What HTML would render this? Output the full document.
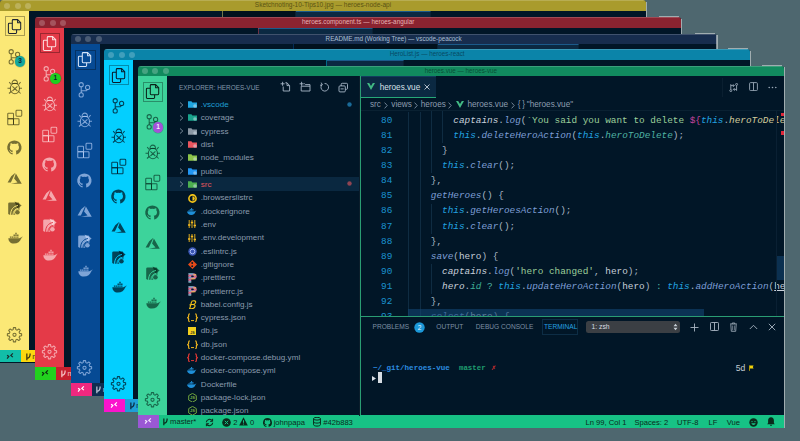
<!DOCTYPE html><html><head><meta charset="utf-8"><style>
*{margin:0;padding:0;box-sizing:border-box}
html,body{width:800px;height:441px;overflow:hidden;background:#4e676f;font-family:"Liberation Sans",sans-serif}
.win{position:absolute;width:646px;height:362.5px;background:#011627;overflow:hidden;border-radius:3px 3px 0 0}
.edge{position:absolute;width:1.3px;background:rgba(215,220,220,0.6)}
.tb{position:absolute;left:0;top:0;width:100%;height:10.6px}
.hl{position:absolute;left:0;top:0;width:100%;height:0.8px;background:rgba(255,255,255,0.18)}
.dot{position:absolute;top:2.5px;width:6px;height:6px;border-radius:50%;background:rgba(255,255,255,0.22)}
.t{position:absolute;white-space:nowrap}
.ttl{position:absolute;left:0;right:0;top:0px;text-align:center;font-size:6.3px;line-height:10px;white-space:nowrap}
.tabbar{position:absolute;top:10.6px;right:0;height:22px;background:#011627}
.tab{position:absolute;top:0;height:22px;background:#01111d;border-right:1px solid #0a2133}
.tab.act{background:#0b2942;border-top:1px solid #1b5a8a}
.ab{position:absolute;left:0;top:10.6px;width:29px;height:339.2px}
.abox{position:absolute;left:4.9px;top:16.1px;width:20.4px;height:20.2px;border:1px solid}
.aic{position:absolute;line-height:0}
.badge{position:absolute;left:14.7px;top:56.3px;width:10.8px;height:10.8px;border-radius:50%;font-size:6.5px;line-height:10.8px;text-align:center;font-weight:bold;box-shadow:0 0 0 0.6px rgba(0,0,0,0.2)}
.st{position:absolute;left:0;top:349.8px;width:100%;height:12.7px}
.rm{position:absolute;left:0;top:0;width:21px;height:12.7px}
</style></head><body>
<div class="win" style="left:0px;top:0px;z-index:1">
<div class="tb" style="background:#a99b2c"><i class="hl"></i><i class="dot" style="left:4px"></i><i class="dot" style="left:14.6px"></i><i class="dot" style="left:25px"></i><div class="ttl" style="color:rgba(60,55,10,0.75);font-size:6.5px">Sketchnoting-10-Tips10.jpg — heroes-node-api</div></div>
<div class="tabbar" style="left:223px">
<div class="tab" style="left:0px;width:73px"></div>
<div class="tab act" style="left:73px;width:135px"></div>
</div>
<div style="position:absolute;left:222.4px;top:10.6px;width:0.9px;height:339.2px;background:#fbe876;opacity:0.45"></div>
<div class="ab" style="background:#fbe876"></div>
<div class="abox" style="border-color:rgba(0,0,0,0.32)"></div>
<svg style="position:absolute;left:-0.4px;top:-0.3px" width="29" height="350" viewBox="0 0 29 350"><g fill="none" stroke="#1c2433" stroke-width="1.05" stroke-linejoin="round"><path d="M13.2 19.6H17.6L20.7 22.7V28.8Q20.7 29.7 19.8 29.7H13.2Q12.3 29.7 12.3 28.8V20.5Q12.3 19.6 13.2 19.6Z"/><path d="M17.6 19.6V22.7H20.7"/><path d="M12.3 23.2H9.3Q8.4 23.2 8.4 24.1V32.6Q8.4 33.5 9.3 33.5H15.7Q16.6 33.5 16.6 32.6V29.7"/></g><g fill="none" stroke="rgba(30,30,5,0.6)" stroke-width="1.05"><circle cx="11.2" cy="51.7" r="2.1"/><circle cx="11.2" cy="61.9" r="2.1"/><circle cx="17.6" cy="54.4" r="2.1"/><path d="M11.2 53.8V59.8M17.6 56.5L16.4 57.8H12L11.2 58.6"/><g transform="translate(7 79.5)"><path d="M5 4a2.75 3.4 0 0 1 5.5 0z"/><ellipse cx="7.9" cy="9" rx="4.6" ry="5.3"/><path d="M5.4 6.9l5 4.6M10.4 6.9l-5 4.6M2.2 2.7L4.2 5M13.6 2.7L11.6 5M0.5 8.8H3.3M15 8.8H12.5M2 14L4.2 12M13.6 14L11.6 12"/></g><g transform="translate(7 109.5)"><rect x="0.75" y="3.75" width="5.75" height="5.5" rx=".7"/><rect x="0.75" y="9.25" width="5.75" height="6" rx=".7"/><rect x="6.5" y="9.25" width="5.5" height="6" rx=".7"/><rect x="9" y="0.75" width="5.75" height="6" rx=".9"/></g></g><g fill="rgba(30,30,5,0.6)"><g transform="translate(7.2 140.2) scale(0.9)"><path d="M8 .2a8 8 0 0 0-2.53 15.59c.4.07.55-.17.55-.38v-1.4c-2.23.48-2.7-1.07-2.7-1.07-.36-.92-.89-1.17-.89-1.17-.73-.5.05-.49.05-.49.8.06 1.23.83 1.23.83.71 1.23 1.87.87 2.33.67.07-.52.28-.87.5-1.07-1.78-.2-3.65-.89-3.65-3.96 0-.87.31-1.59.83-2.15-.08-.2-.36-1.02.08-2.12 0 0 .67-.22 2.2.82a7.6 7.6 0 0 1 4 0c1.53-1.04 2.2-.82 2.2-.82.44 1.1.16 1.92.08 2.12.51.56.82 1.28.82 2.15 0 3.08-1.87 3.76-3.66 3.96.29.25.54.73.54 1.48v2.2c0 .21.15.46.55.38A8 8 0 0 0 8 .2z"/></g><path transform="translate(7.6 171.2) scale(0.59)" d="M5.483 21.3H24L14.025 4.013l-3.038 8.347 5.836 6.938L5.483 21.3zM13.23 2.7L6.105 8.677 0 19.253h5.505v.014L13.23 2.7z"/><rect x="8.2" y="202.4" width="11.2" height="12.3" rx="1.4"/><path d="M14.6 201.4L21.6 205.2L17.6 209.2Z"/><path d="M10.6 214.9C10.6 209.6 13.3 206.3 17.9 205.5" fill="none" stroke="#fbe876" stroke-width="1.0"/><path d="M12.9 214.9C13.1 211.1 15.2 208.8 18.6 208.2" fill="none" stroke="#fbe876" stroke-width="0.9"/><circle cx="17.4" cy="212.3" r="3.1" fill="#fbe876"/><circle cx="17.4" cy="212.3" r="2.3"/><path d="M8.3 238.3H19.5C20 237.6 20.8 237.3 21.5 237.5C21.8 236.8 22.2 236.5 22.5 236.6C22.3 237.6 21.8 238.2 21.2 238.6C20.2 241.6 17.6 243.6 13.8 243.6C10.4 243.6 8.6 241.4 8.3 238.3Z"/><path d="M9.9 236.4h1.4v1.4H9.9zM11.7 236.4h1.4v1.4h-1.4zM13.5 236.4h1.4v1.4h-1.4zM15.3 236.4h1.4v1.4h-1.4zM17.1 236.4h1.4v1.4h-1.4zM13.5 234.6h1.4v1.4h-1.4zM15.3 234.6h1.4v1.4h-1.4zM17.1 234.6h1.4v1.4h-1.4zM15.3 232.8h1.4v1.4h-1.4z"/></g><g fill="none" stroke="rgba(30,30,5,0.6)" stroke-width="1.05" stroke-linejoin="round"><path d="M13.14,329.63 L13.42,327.63 L15.58,327.63 L15.86,329.63 L17.16,330.16 L18.77,328.96 L20.29,330.48 L19.09,332.09 L19.62,333.39 L21.62,333.67 L21.62,335.83 L19.62,336.11 L19.09,337.41 L20.29,339.02 L18.77,340.54 L17.16,339.34 L15.86,339.87 L15.58,341.87 L13.42,341.87 L13.14,339.87 L11.84,339.34 L10.23,340.54 L8.71,339.02 L9.91,337.41 L9.38,336.11 L7.38,335.83 L7.38,333.67 L9.38,333.39 L9.91,332.09 L8.71,330.48 L10.23,328.96 L11.84,330.16Z"/><circle cx="14.5" cy="334.75" r="1.6"/></g></svg>
<div class="badge" style="background:#12a79d;color:#123">3</div>
<div class="st" style="background:#fbd80f"><div class="rm" style="background:#12bea8"></div><svg style="position:absolute;left:6px;top:2px" width="8" height="8" viewBox="0 0 8 8"><path d="M1.1 3.15L2.85 4.4L1.1 6.65M6.85 1.4L4.85 3.4L6.85 5.15" fill="none" stroke="#1a2a28" stroke-width="1.2"/></svg><svg style="position:absolute;left:24.5px;top:1.8px" width="7" height="9" viewBox="0 0 7 9"><path d="M1.85 1.4V8.3M1.85 6.4C3.8 6 5.1 4.6 5.1 2.2M5.1 1.5V2.6" fill="none" stroke="#3a3410" stroke-width="1.25"/></svg><div class="t" style="left:32.2px;top:2.0px;font-size:7.6px;line-height:9px;color:#3a3410">master*</div></div>
</div>
<div class="edge" style="left:645.80px;top:1.50px;height:361.0px;z-index:1"></div>
<div class="edge" style="left:624.00px;top:-0.90px;width:20px;height:1.1px;z-index:1"></div>
<div class="win" style="left:35.2px;top:17.1px;z-index:2">
<div class="tb" style="background:#8b2330"><i class="hl"></i><i class="dot" style="left:4px"></i><i class="dot" style="left:14.6px"></i><i class="dot" style="left:25px"></i><div class="ttl" style="color:rgba(255,215,215,0.8);font-size:6.38px">heroes.component.ts — heroes-angular</div></div>
<div class="tabbar" style="left:223px">
<div class="tab act" style="left:0px;width:115px"></div>
</div>
<div style="position:absolute;left:222.4px;top:10.6px;width:0.9px;height:339.2px;background:#e43a48;opacity:0.45"></div>
<div class="ab" style="background:#e43a48"></div>
<div class="abox" style="border-color:rgba(0,0,0,0.32)"></div>
<svg style="position:absolute;left:-0.4px;top:-0.3px" width="29" height="350" viewBox="0 0 29 350"><g fill="none" stroke="rgba(255,240,240,0.9)" stroke-width="1.05" stroke-linejoin="round"><path d="M13.2 19.6H17.6L20.7 22.7V28.8Q20.7 29.7 19.8 29.7H13.2Q12.3 29.7 12.3 28.8V20.5Q12.3 19.6 13.2 19.6Z"/><path d="M17.6 19.6V22.7H20.7"/><path d="M12.3 23.2H9.3Q8.4 23.2 8.4 24.1V32.6Q8.4 33.5 9.3 33.5H15.7Q16.6 33.5 16.6 32.6V29.7"/></g><g fill="none" stroke="rgba(255,235,235,0.62)" stroke-width="1.05"><circle cx="11.2" cy="51.7" r="2.1"/><circle cx="11.2" cy="61.9" r="2.1"/><circle cx="17.6" cy="54.4" r="2.1"/><path d="M11.2 53.8V59.8M17.6 56.5L16.4 57.8H12L11.2 58.6"/><g transform="translate(7 79.5)"><path d="M5 4a2.75 3.4 0 0 1 5.5 0z"/><ellipse cx="7.9" cy="9" rx="4.6" ry="5.3"/><path d="M5.4 6.9l5 4.6M10.4 6.9l-5 4.6M2.2 2.7L4.2 5M13.6 2.7L11.6 5M0.5 8.8H3.3M15 8.8H12.5M2 14L4.2 12M13.6 14L11.6 12"/></g><g transform="translate(7 109.5)"><rect x="0.75" y="3.75" width="5.75" height="5.5" rx=".7"/><rect x="0.75" y="9.25" width="5.75" height="6" rx=".7"/><rect x="6.5" y="9.25" width="5.5" height="6" rx=".7"/><rect x="9" y="0.75" width="5.75" height="6" rx=".9"/></g></g><g fill="rgba(255,235,235,0.62)"><g transform="translate(7.2 140.2) scale(0.9)"><path d="M8 .2a8 8 0 0 0-2.53 15.59c.4.07.55-.17.55-.38v-1.4c-2.23.48-2.7-1.07-2.7-1.07-.36-.92-.89-1.17-.89-1.17-.73-.5.05-.49.05-.49.8.06 1.23.83 1.23.83.71 1.23 1.87.87 2.33.67.07-.52.28-.87.5-1.07-1.78-.2-3.65-.89-3.65-3.96 0-.87.31-1.59.83-2.15-.08-.2-.36-1.02.08-2.12 0 0 .67-.22 2.2.82a7.6 7.6 0 0 1 4 0c1.53-1.04 2.2-.82 2.2-.82.44 1.1.16 1.92.08 2.12.51.56.82 1.28.82 2.15 0 3.08-1.87 3.76-3.66 3.96.29.25.54.73.54 1.48v2.2c0 .21.15.46.55.38A8 8 0 0 0 8 .2z"/></g><path transform="translate(7.6 171.2) scale(0.59)" d="M5.483 21.3H24L14.025 4.013l-3.038 8.347 5.836 6.938L5.483 21.3zM13.23 2.7L6.105 8.677 0 19.253h5.505v.014L13.23 2.7z"/><rect x="8.2" y="202.4" width="11.2" height="12.3" rx="1.4"/><path d="M14.6 201.4L21.6 205.2L17.6 209.2Z"/><path d="M10.6 214.9C10.6 209.6 13.3 206.3 17.9 205.5" fill="none" stroke="#e43a48" stroke-width="1.0"/><path d="M12.9 214.9C13.1 211.1 15.2 208.8 18.6 208.2" fill="none" stroke="#e43a48" stroke-width="0.9"/><circle cx="17.4" cy="212.3" r="3.1" fill="#e43a48"/><circle cx="17.4" cy="212.3" r="2.3"/><path d="M8.3 238.3H19.5C20 237.6 20.8 237.3 21.5 237.5C21.8 236.8 22.2 236.5 22.5 236.6C22.3 237.6 21.8 238.2 21.2 238.6C20.2 241.6 17.6 243.6 13.8 243.6C10.4 243.6 8.6 241.4 8.3 238.3Z"/><path d="M9.9 236.4h1.4v1.4H9.9zM11.7 236.4h1.4v1.4h-1.4zM13.5 236.4h1.4v1.4h-1.4zM15.3 236.4h1.4v1.4h-1.4zM17.1 236.4h1.4v1.4h-1.4zM13.5 234.6h1.4v1.4h-1.4zM15.3 234.6h1.4v1.4h-1.4zM17.1 234.6h1.4v1.4h-1.4zM15.3 232.8h1.4v1.4h-1.4z"/></g><g fill="none" stroke="rgba(255,235,235,0.62)" stroke-width="1.05" stroke-linejoin="round"><path d="M13.14,329.63 L13.42,327.63 L15.58,327.63 L15.86,329.63 L17.16,330.16 L18.77,328.96 L20.29,330.48 L19.09,332.09 L19.62,333.39 L21.62,333.67 L21.62,335.83 L19.62,336.11 L19.09,337.41 L20.29,339.02 L18.77,340.54 L17.16,339.34 L15.86,339.87 L15.58,341.87 L13.42,341.87 L13.14,339.87 L11.84,339.34 L10.23,340.54 L8.71,339.02 L9.91,337.41 L9.38,336.11 L7.38,335.83 L7.38,333.67 L9.38,333.39 L9.91,332.09 L8.71,330.48 L10.23,328.96 L11.84,330.16Z"/><circle cx="14.5" cy="334.75" r="1.6"/></g></svg>
<div class="badge" style="background:#1ecf1e;color:#123">1</div>
<div class="st" style="background:#c6202e"><div class="rm" style="background:#22d11e"></div><svg style="position:absolute;left:6px;top:2px" width="8" height="8" viewBox="0 0 8 8"><path d="M1.1 3.15L2.85 4.4L1.1 6.65M6.85 1.4L4.85 3.4L6.85 5.15" fill="none" stroke="#0d2a10" stroke-width="1.2"/></svg><svg style="position:absolute;left:24.5px;top:1.8px" width="7" height="9" viewBox="0 0 7 9"><path d="M1.85 1.4V8.3M1.85 6.4C3.8 6 5.1 4.6 5.1 2.2M5.1 1.5V2.6" fill="none" stroke="rgba(255,225,225,0.85)" stroke-width="1.25"/></svg><div class="t" style="left:32.2px;top:2.0px;font-size:7.6px;line-height:9px;color:rgba(255,225,225,0.85)">master*</div></div>
</div>
<div class="edge" style="left:681.00px;top:18.60px;height:361.0px;z-index:2"></div>
<div class="edge" style="left:659.20px;top:16.20px;width:20px;height:1.1px;z-index:2"></div>
<div class="win" style="left:70.6px;top:33.5px;z-index:3">
<div class="tb" style="background:#172d4e"><i class="hl"></i><i class="dot" style="left:4px"></i><i class="dot" style="left:14.6px"></i><i class="dot" style="left:25px"></i><div class="ttl" style="color:rgba(210,225,245,0.8);font-size:6.3px">README.md (Working Tree) — vscode-peacock</div></div>
<div class="tabbar" style="left:223px">
<div class="tab" style="left:0px;width:144px"></div>
<div class="tab act" style="left:144px;width:141px"></div>
</div>
<div style="position:absolute;left:222.4px;top:10.6px;width:0.9px;height:339.2px;background:#064a94;opacity:0.45"></div>
<div class="ab" style="background:#064a94"></div>
<div class="abox" style="border-color:rgba(0,0,0,0.32)"></div>
<svg style="position:absolute;left:-0.4px;top:-0.3px" width="29" height="350" viewBox="0 0 29 350"><g fill="none" stroke="rgba(230,240,255,0.92)" stroke-width="1.05" stroke-linejoin="round"><path d="M13.2 19.6H17.6L20.7 22.7V28.8Q20.7 29.7 19.8 29.7H13.2Q12.3 29.7 12.3 28.8V20.5Q12.3 19.6 13.2 19.6Z"/><path d="M17.6 19.6V22.7H20.7"/><path d="M12.3 23.2H9.3Q8.4 23.2 8.4 24.1V32.6Q8.4 33.5 9.3 33.5H15.7Q16.6 33.5 16.6 32.6V29.7"/></g><g fill="none" stroke="rgba(200,220,255,0.62)" stroke-width="1.05"><circle cx="11.2" cy="51.7" r="2.1"/><circle cx="11.2" cy="61.9" r="2.1"/><circle cx="17.6" cy="54.4" r="2.1"/><path d="M11.2 53.8V59.8M17.6 56.5L16.4 57.8H12L11.2 58.6"/><g transform="translate(7 79.5)"><path d="M5 4a2.75 3.4 0 0 1 5.5 0z"/><ellipse cx="7.9" cy="9" rx="4.6" ry="5.3"/><path d="M5.4 6.9l5 4.6M10.4 6.9l-5 4.6M2.2 2.7L4.2 5M13.6 2.7L11.6 5M0.5 8.8H3.3M15 8.8H12.5M2 14L4.2 12M13.6 14L11.6 12"/></g><g transform="translate(7 109.5)"><rect x="0.75" y="3.75" width="5.75" height="5.5" rx=".7"/><rect x="0.75" y="9.25" width="5.75" height="6" rx=".7"/><rect x="6.5" y="9.25" width="5.5" height="6" rx=".7"/><rect x="9" y="0.75" width="5.75" height="6" rx=".9"/></g></g><g fill="rgba(200,220,255,0.62)"><g transform="translate(7.2 140.2) scale(0.9)"><path d="M8 .2a8 8 0 0 0-2.53 15.59c.4.07.55-.17.55-.38v-1.4c-2.23.48-2.7-1.07-2.7-1.07-.36-.92-.89-1.17-.89-1.17-.73-.5.05-.49.05-.49.8.06 1.23.83 1.23.83.71 1.23 1.87.87 2.33.67.07-.52.28-.87.5-1.07-1.78-.2-3.65-.89-3.65-3.96 0-.87.31-1.59.83-2.15-.08-.2-.36-1.02.08-2.12 0 0 .67-.22 2.2.82a7.6 7.6 0 0 1 4 0c1.53-1.04 2.2-.82 2.2-.82.44 1.1.16 1.92.08 2.12.51.56.82 1.28.82 2.15 0 3.08-1.87 3.76-3.66 3.96.29.25.54.73.54 1.48v2.2c0 .21.15.46.55.38A8 8 0 0 0 8 .2z"/></g><path transform="translate(7.6 171.2) scale(0.59)" d="M5.483 21.3H24L14.025 4.013l-3.038 8.347 5.836 6.938L5.483 21.3zM13.23 2.7L6.105 8.677 0 19.253h5.505v.014L13.23 2.7z"/><rect x="8.2" y="202.4" width="11.2" height="12.3" rx="1.4"/><path d="M14.6 201.4L21.6 205.2L17.6 209.2Z"/><path d="M10.6 214.9C10.6 209.6 13.3 206.3 17.9 205.5" fill="none" stroke="#064a94" stroke-width="1.0"/><path d="M12.9 214.9C13.1 211.1 15.2 208.8 18.6 208.2" fill="none" stroke="#064a94" stroke-width="0.9"/><circle cx="17.4" cy="212.3" r="3.1" fill="#064a94"/><circle cx="17.4" cy="212.3" r="2.3"/><path d="M8.3 238.3H19.5C20 237.6 20.8 237.3 21.5 237.5C21.8 236.8 22.2 236.5 22.5 236.6C22.3 237.6 21.8 238.2 21.2 238.6C20.2 241.6 17.6 243.6 13.8 243.6C10.4 243.6 8.6 241.4 8.3 238.3Z"/><path d="M9.9 236.4h1.4v1.4H9.9zM11.7 236.4h1.4v1.4h-1.4zM13.5 236.4h1.4v1.4h-1.4zM15.3 236.4h1.4v1.4h-1.4zM17.1 236.4h1.4v1.4h-1.4zM13.5 234.6h1.4v1.4h-1.4zM15.3 234.6h1.4v1.4h-1.4zM17.1 234.6h1.4v1.4h-1.4zM15.3 232.8h1.4v1.4h-1.4z"/></g><g fill="none" stroke="rgba(200,220,255,0.62)" stroke-width="1.05" stroke-linejoin="round"><path d="M13.14,329.63 L13.42,327.63 L15.58,327.63 L15.86,329.63 L17.16,330.16 L18.77,328.96 L20.29,330.48 L19.09,332.09 L19.62,333.39 L21.62,333.67 L21.62,335.83 L19.62,336.11 L19.09,337.41 L20.29,339.02 L18.77,340.54 L17.16,339.34 L15.86,339.87 L15.58,341.87 L13.42,341.87 L13.14,339.87 L11.84,339.34 L10.23,340.54 L8.71,339.02 L9.91,337.41 L9.38,336.11 L7.38,335.83 L7.38,333.67 L9.38,333.39 L9.91,332.09 L8.71,330.48 L10.23,328.96 L11.84,330.16Z"/><circle cx="14.5" cy="334.75" r="1.6"/></g></svg>
<div class="st" style="background:#0f2d50"><div class="rm" style="background:#f0287f"></div><svg style="position:absolute;left:6px;top:2px" width="8" height="8" viewBox="0 0 8 8"><path d="M1.1 3.15L2.85 4.4L1.1 6.65M6.85 1.4L4.85 3.4L6.85 5.15" fill="none" stroke="#fff" stroke-width="1.2"/></svg><svg style="position:absolute;left:24.5px;top:1.8px" width="7" height="9" viewBox="0 0 7 9"><path d="M1.85 1.4V8.3M1.85 6.4C3.8 6 5.1 4.6 5.1 2.2M5.1 1.5V2.6" fill="none" stroke="rgba(215,225,240,0.85)" stroke-width="1.25"/></svg><div class="t" style="left:32.2px;top:2.0px;font-size:7.6px;line-height:9px;color:rgba(215,225,240,0.85)">master*</div></div>
</div>
<div class="edge" style="left:716.40px;top:35.00px;height:361.0px;z-index:3"></div>
<div class="edge" style="left:694.60px;top:32.60px;width:20px;height:1.1px;z-index:3"></div>
<div class="win" style="left:104.1px;top:49.2px;z-index:4">
<div class="tb" style="background:#0b84a9"><i class="hl"></i><i class="dot" style="left:4px"></i><i class="dot" style="left:14.6px"></i><i class="dot" style="left:25px"></i><div class="ttl" style="color:rgba(5,45,65,0.7);font-size:6.3px">HeroList.js — heroes-react</div></div>
<div class="tabbar" style="left:223px">
<div class="tab act" style="left:0px;width:77px"></div>
</div>
<div style="position:absolute;left:222.4px;top:10.6px;width:0.9px;height:339.2px;background:#03cfff;opacity:0.45"></div>
<div class="ab" style="background:#03cfff"></div>
<div class="abox" style="border-color:rgba(0,0,0,0.32)"></div>
<svg style="position:absolute;left:-0.4px;top:-0.3px" width="29" height="350" viewBox="0 0 29 350"><g fill="none" stroke="#0a1a2a" stroke-width="1.05" stroke-linejoin="round"><path d="M13.2 19.6H17.6L20.7 22.7V28.8Q20.7 29.7 19.8 29.7H13.2Q12.3 29.7 12.3 28.8V20.5Q12.3 19.6 13.2 19.6Z"/><path d="M17.6 19.6V22.7H20.7"/><path d="M12.3 23.2H9.3Q8.4 23.2 8.4 24.1V32.6Q8.4 33.5 9.3 33.5H15.7Q16.6 33.5 16.6 32.6V29.7"/></g><g fill="none" stroke="rgba(0,20,35,0.75)" stroke-width="1.05"><circle cx="11.2" cy="51.7" r="2.1"/><circle cx="11.2" cy="61.9" r="2.1"/><circle cx="17.6" cy="54.4" r="2.1"/><path d="M11.2 53.8V59.8M17.6 56.5L16.4 57.8H12L11.2 58.6"/><g transform="translate(7 79.5)"><path d="M5 4a2.75 3.4 0 0 1 5.5 0z"/><ellipse cx="7.9" cy="9" rx="4.6" ry="5.3"/><path d="M5.4 6.9l5 4.6M10.4 6.9l-5 4.6M2.2 2.7L4.2 5M13.6 2.7L11.6 5M0.5 8.8H3.3M15 8.8H12.5M2 14L4.2 12M13.6 14L11.6 12"/></g><g transform="translate(7 109.5)"><rect x="0.75" y="3.75" width="5.75" height="5.5" rx=".7"/><rect x="0.75" y="9.25" width="5.75" height="6" rx=".7"/><rect x="6.5" y="9.25" width="5.5" height="6" rx=".7"/><rect x="9" y="0.75" width="5.75" height="6" rx=".9"/></g></g><g fill="rgba(0,20,35,0.75)"><g transform="translate(7.2 140.2) scale(0.9)"><path d="M8 .2a8 8 0 0 0-2.53 15.59c.4.07.55-.17.55-.38v-1.4c-2.23.48-2.7-1.07-2.7-1.07-.36-.92-.89-1.17-.89-1.17-.73-.5.05-.49.05-.49.8.06 1.23.83 1.23.83.71 1.23 1.87.87 2.33.67.07-.52.28-.87.5-1.07-1.78-.2-3.65-.89-3.65-3.96 0-.87.31-1.59.83-2.15-.08-.2-.36-1.02.08-2.12 0 0 .67-.22 2.2.82a7.6 7.6 0 0 1 4 0c1.53-1.04 2.2-.82 2.2-.82.44 1.1.16 1.92.08 2.12.51.56.82 1.28.82 2.15 0 3.08-1.87 3.76-3.66 3.96.29.25.54.73.54 1.48v2.2c0 .21.15.46.55.38A8 8 0 0 0 8 .2z"/></g><path transform="translate(7.6 171.2) scale(0.59)" d="M5.483 21.3H24L14.025 4.013l-3.038 8.347 5.836 6.938L5.483 21.3zM13.23 2.7L6.105 8.677 0 19.253h5.505v.014L13.23 2.7z"/><rect x="8.2" y="202.4" width="11.2" height="12.3" rx="1.4"/><path d="M14.6 201.4L21.6 205.2L17.6 209.2Z"/><path d="M10.6 214.9C10.6 209.6 13.3 206.3 17.9 205.5" fill="none" stroke="#03cfff" stroke-width="1.0"/><path d="M12.9 214.9C13.1 211.1 15.2 208.8 18.6 208.2" fill="none" stroke="#03cfff" stroke-width="0.9"/><circle cx="17.4" cy="212.3" r="3.1" fill="#03cfff"/><circle cx="17.4" cy="212.3" r="2.3"/><path d="M8.3 238.3H19.5C20 237.6 20.8 237.3 21.5 237.5C21.8 236.8 22.2 236.5 22.5 236.6C22.3 237.6 21.8 238.2 21.2 238.6C20.2 241.6 17.6 243.6 13.8 243.6C10.4 243.6 8.6 241.4 8.3 238.3Z"/><path d="M9.9 236.4h1.4v1.4H9.9zM11.7 236.4h1.4v1.4h-1.4zM13.5 236.4h1.4v1.4h-1.4zM15.3 236.4h1.4v1.4h-1.4zM17.1 236.4h1.4v1.4h-1.4zM13.5 234.6h1.4v1.4h-1.4zM15.3 234.6h1.4v1.4h-1.4zM17.1 234.6h1.4v1.4h-1.4zM15.3 232.8h1.4v1.4h-1.4z"/></g><g fill="none" stroke="rgba(0,20,35,0.75)" stroke-width="1.05" stroke-linejoin="round"><path d="M13.14,329.63 L13.42,327.63 L15.58,327.63 L15.86,329.63 L17.16,330.16 L18.77,328.96 L20.29,330.48 L19.09,332.09 L19.62,333.39 L21.62,333.67 L21.62,335.83 L19.62,336.11 L19.09,337.41 L20.29,339.02 L18.77,340.54 L17.16,339.34 L15.86,339.87 L15.58,341.87 L13.42,341.87 L13.14,339.87 L11.84,339.34 L10.23,340.54 L8.71,339.02 L9.91,337.41 L9.38,336.11 L7.38,335.83 L7.38,333.67 L9.38,333.39 L9.91,332.09 L8.71,330.48 L10.23,328.96 L11.84,330.16Z"/><circle cx="14.5" cy="334.75" r="1.6"/></g></svg>
<div class="st" style="background:#1f9fd8"><div class="rm" style="background:#fa14cc"></div><svg style="position:absolute;left:6px;top:2px" width="8" height="8" viewBox="0 0 8 8"><path d="M1.1 3.15L2.85 4.4L1.1 6.65M6.85 1.4L4.85 3.4L6.85 5.15" fill="none" stroke="#fff" stroke-width="1.2"/></svg><svg style="position:absolute;left:24.5px;top:1.8px" width="7" height="9" viewBox="0 0 7 9"><path d="M1.85 1.4V8.3M1.85 6.4C3.8 6 5.1 4.6 5.1 2.2M5.1 1.5V2.6" fill="none" stroke="#0b2a40" stroke-width="1.25"/></svg><div class="t" style="left:32.2px;top:2.0px;font-size:7.6px;line-height:9px;color:#0b2a40">master*</div></div>
</div>
<div class="edge" style="left:749.90px;top:50.70px;height:361.0px;z-index:4"></div>
<div class="edge" style="left:728.10px;top:48.30px;width:20px;height:1.1px;z-index:4"></div>
<div class="win" style="left:137.9px;top:65.5px;z-index:5">
<div class="tb" style="background:#118a5e"><i class="hl"></i><i class="dot" style="left:4px"></i><i class="dot" style="left:14.6px"></i><i class="dot" style="left:25px"></i><div class="ttl" style="color:rgba(5,50,35,0.7);font-size:6.3px">heroes.vue — heroes-vue</div></div>
<div class="tabbar" style="left:223px">
<div class="tab act" style="left:0px;width:75px"></div>
</div>
<div style="position:absolute;left:222.4px;top:10.6px;width:0.9px;height:339.2px;background:#2a9d73;opacity:1"></div>
<div class="ab" style="background:#3dd39b"></div>
<div class="abox" style="border-color:rgba(0,0,0,0.32)"></div>
<svg style="position:absolute;left:-0.4px;top:-0.3px" width="29" height="350" viewBox="0 0 29 350"><g fill="none" stroke="#0a2218" stroke-width="1.05" stroke-linejoin="round"><path d="M13.2 19.6H17.6L20.7 22.7V28.8Q20.7 29.7 19.8 29.7H13.2Q12.3 29.7 12.3 28.8V20.5Q12.3 19.6 13.2 19.6Z"/><path d="M17.6 19.6V22.7H20.7"/><path d="M12.3 23.2H9.3Q8.4 23.2 8.4 24.1V32.6Q8.4 33.5 9.3 33.5H15.7Q16.6 33.5 16.6 32.6V29.7"/></g><g fill="none" stroke="rgba(0,35,25,0.62)" stroke-width="1.05"><circle cx="11.2" cy="51.7" r="2.1"/><circle cx="11.2" cy="61.9" r="2.1"/><circle cx="17.6" cy="54.4" r="2.1"/><path d="M11.2 53.8V59.8M17.6 56.5L16.4 57.8H12L11.2 58.6"/><g transform="translate(7 79.5)"><path d="M5 4a2.75 3.4 0 0 1 5.5 0z"/><ellipse cx="7.9" cy="9" rx="4.6" ry="5.3"/><path d="M5.4 6.9l5 4.6M10.4 6.9l-5 4.6M2.2 2.7L4.2 5M13.6 2.7L11.6 5M0.5 8.8H3.3M15 8.8H12.5M2 14L4.2 12M13.6 14L11.6 12"/></g><g transform="translate(7 109.5)"><rect x="0.75" y="3.75" width="5.75" height="5.5" rx=".7"/><rect x="0.75" y="9.25" width="5.75" height="6" rx=".7"/><rect x="6.5" y="9.25" width="5.5" height="6" rx=".7"/><rect x="9" y="0.75" width="5.75" height="6" rx=".9"/></g></g><g fill="rgba(0,35,25,0.62)"><g transform="translate(7.2 140.2) scale(0.9)"><path d="M8 .2a8 8 0 0 0-2.53 15.59c.4.07.55-.17.55-.38v-1.4c-2.23.48-2.7-1.07-2.7-1.07-.36-.92-.89-1.17-.89-1.17-.73-.5.05-.49.05-.49.8.06 1.23.83 1.23.83.71 1.23 1.87.87 2.33.67.07-.52.28-.87.5-1.07-1.78-.2-3.65-.89-3.65-3.96 0-.87.31-1.59.83-2.15-.08-.2-.36-1.02.08-2.12 0 0 .67-.22 2.2.82a7.6 7.6 0 0 1 4 0c1.53-1.04 2.2-.82 2.2-.82.44 1.1.16 1.92.08 2.12.51.56.82 1.28.82 2.15 0 3.08-1.87 3.76-3.66 3.96.29.25.54.73.54 1.48v2.2c0 .21.15.46.55.38A8 8 0 0 0 8 .2z"/></g><path transform="translate(7.6 171.2) scale(0.59)" d="M5.483 21.3H24L14.025 4.013l-3.038 8.347 5.836 6.938L5.483 21.3zM13.23 2.7L6.105 8.677 0 19.253h5.505v.014L13.23 2.7z"/><rect x="8.2" y="202.4" width="11.2" height="12.3" rx="1.4"/><path d="M14.6 201.4L21.6 205.2L17.6 209.2Z"/><path d="M10.6 214.9C10.6 209.6 13.3 206.3 17.9 205.5" fill="none" stroke="#3dd39b" stroke-width="1.0"/><path d="M12.9 214.9C13.1 211.1 15.2 208.8 18.6 208.2" fill="none" stroke="#3dd39b" stroke-width="0.9"/><circle cx="17.4" cy="212.3" r="3.1" fill="#3dd39b"/><circle cx="17.4" cy="212.3" r="2.3"/><path d="M8.3 238.3H19.5C20 237.6 20.8 237.3 21.5 237.5C21.8 236.8 22.2 236.5 22.5 236.6C22.3 237.6 21.8 238.2 21.2 238.6C20.2 241.6 17.6 243.6 13.8 243.6C10.4 243.6 8.6 241.4 8.3 238.3Z"/><path d="M9.9 236.4h1.4v1.4H9.9zM11.7 236.4h1.4v1.4h-1.4zM13.5 236.4h1.4v1.4h-1.4zM15.3 236.4h1.4v1.4h-1.4zM17.1 236.4h1.4v1.4h-1.4zM13.5 234.6h1.4v1.4h-1.4zM15.3 234.6h1.4v1.4h-1.4zM17.1 234.6h1.4v1.4h-1.4zM15.3 232.8h1.4v1.4h-1.4z"/></g><g fill="none" stroke="rgba(0,35,25,0.62)" stroke-width="1.05" stroke-linejoin="round"><path d="M13.14,329.63 L13.42,327.63 L15.58,327.63 L15.86,329.63 L17.16,330.16 L18.77,328.96 L20.29,330.48 L19.09,332.09 L19.62,333.39 L21.62,333.67 L21.62,335.83 L19.62,336.11 L19.09,337.41 L20.29,339.02 L18.77,340.54 L17.16,339.34 L15.86,339.87 L15.58,341.87 L13.42,341.87 L13.14,339.87 L11.84,339.34 L10.23,340.54 L8.71,339.02 L9.91,337.41 L9.38,336.11 L7.38,335.83 L7.38,333.67 L9.38,333.39 L9.91,332.09 L8.71,330.48 L10.23,328.96 L11.84,330.16Z"/><circle cx="14.5" cy="334.75" r="1.6"/></g></svg>
<div class="badge" style="background:#a352d8;color:#f4ecff">1</div>
<div class="st" style="background:#17c285"><div class="rm" style="background:#9b58d5"></div><svg style="position:absolute;left:6px;top:2px" width="8" height="8" viewBox="0 0 8 8"><path d="M1.1 3.15L2.85 4.4L1.1 6.65M6.85 1.4L4.85 3.4L6.85 5.15" fill="none" stroke="#f3e9ff" stroke-width="1.2"/></svg><svg style="position:absolute;left:24.5px;top:1.8px" width="7" height="9" viewBox="0 0 7 9"><path d="M1.85 1.4V8.3M1.85 6.4C3.8 6 5.1 4.6 5.1 2.2M5.1 1.5V2.6" fill="none" stroke="#0a2a1c" stroke-width="1.25"/></svg><div class="t" style="left:32.2px;top:2.0px;font-size:7.6px;line-height:9px;color:#0a2a1c">master*</div></div>
<div style="position:absolute;left:29.00px;top:111.70px;width:192.90px;height:13.40px;background:#0a2840;"></div>
<div class="t" style="left:41.00px;top:18.66px;font-size:6.4px;line-height:7.68px;color:#8196aa;font-family:'Liberation Sans',sans-serif;">EXPLORER: HEROES-VUE</div>
<svg style="position:absolute;left:142.10px;top:15.50px" width="11" height="11" viewBox="0 0 11 11"><g fill="none" stroke="#a9b8c8" stroke-width=".9"><path d="M3.2 5.5V10H9.6V4.6L7 1.8H5.4"/><path d="M7 1.8V4.6H9.6"/><path d="M2.6 .8V4.8M.6 2.8H4.6"/></g></svg>
<svg style="position:absolute;left:161.60px;top:15.50px" width="12" height="11" viewBox="0 0 12 11"><g fill="none" stroke="#a9b8c8" stroke-width=".9"><path d="M2.2 5.2V10H11V3.6H6.4L5.4 2.6H5"/><path d="M2.2 5.2H11"/><path d="M2.6 .8V4.8M.6 2.8H4.6"/></g></svg>
<svg style="position:absolute;left:181.60px;top:15.50px" width="11" height="11" viewBox="0 0 11 11"><g fill="none" stroke="#a9b8c8" stroke-width=".9"><path d="M3.1 3.6A3.8 3.8 0 1 0 5.6 2.5"/><path d="M2.2 1.6L3.3 3.8L1 4.3"/></g></svg>
<svg style="position:absolute;left:200.60px;top:16.00px" width="11" height="11" viewBox="0 0 11 11"><g stroke="#a9b8c8" stroke-width=".9"><rect x="3.2" y="1.3" width="6.3" height="6" rx="1" fill="none"/><rect x="1" y="3.9" width="6.3" height="6" rx="1" fill="#011627"/><path d="M2.6 6.9H5.7"/></g></svg>
<svg style="position:absolute;left:41.10px;top:36.00px" width="5" height="6" viewBox="0 0 5 6"><path d="M1 .5l2.8 2.5L1 5.5" fill="none" stroke="#8393a3" stroke-width=".9"/></svg>
<svg style="position:absolute;left:49.90px;top:35.60px" width="9" height="7" viewBox="0 0 9 7"><path d="M0 .3h3.4l1 1.1H9v5.4H0z" fill="#1fa6e0"/><circle cx="7" cy="5" r="1.8" fill="#d8e6ee" opacity=".5"/></svg>
<div class="t" style="left:62.90px;top:34.54px;font-size:8.1px;line-height:9.72px;color:#1f9fd4;font-family:'Liberation Sans',sans-serif;">.vscode</div>
<svg style="position:absolute;left:41.10px;top:49.32px" width="5" height="6" viewBox="0 0 5 6"><path d="M1 .5l2.8 2.5L1 5.5" fill="none" stroke="#8393a3" stroke-width=".9"/></svg>
<svg style="position:absolute;left:49.90px;top:48.92px" width="9" height="7" viewBox="0 0 9 7"><path d="M0 .3h3.4l1 1.1H9v5.4H0z" fill="#19a38c"/><circle cx="7" cy="5" r="1.8" fill="#d8e6ee" opacity=".5"/></svg>
<div class="t" style="left:62.90px;top:47.86px;font-size:8.1px;line-height:9.72px;color:#8b9bad;font-family:'Liberation Sans',sans-serif;">coverage</div>
<svg style="position:absolute;left:41.10px;top:62.64px" width="5" height="6" viewBox="0 0 5 6"><path d="M1 .5l2.8 2.5L1 5.5" fill="none" stroke="#8393a3" stroke-width=".9"/></svg>
<svg style="position:absolute;left:49.90px;top:62.24px" width="9" height="7" viewBox="0 0 9 7"><path d="M0 .3h3.4l1 1.1H9v5.4H0z" fill="#8a97a3"/><circle cx="7" cy="5" r="1.8" fill="#d8e6ee" opacity=".5"/></svg>
<div class="t" style="left:62.90px;top:61.18px;font-size:8.1px;line-height:9.72px;color:#8b9bad;font-family:'Liberation Sans',sans-serif;">cypress</div>
<svg style="position:absolute;left:41.10px;top:75.96px" width="5" height="6" viewBox="0 0 5 6"><path d="M1 .5l2.8 2.5L1 5.5" fill="none" stroke="#8393a3" stroke-width=".9"/></svg>
<svg style="position:absolute;left:49.90px;top:75.56px" width="9" height="7" viewBox="0 0 9 7"><path d="M0 .3h3.4l1 1.1H9v5.4H0z" fill="#e9555e"/><circle cx="7" cy="5" r="1.8" fill="#d8e6ee" opacity=".5"/></svg>
<div class="t" style="left:62.90px;top:74.50px;font-size:8.1px;line-height:9.72px;color:#8b9bad;font-family:'Liberation Sans',sans-serif;">dist</div>
<svg style="position:absolute;left:41.10px;top:89.28px" width="5" height="6" viewBox="0 0 5 6"><path d="M1 .5l2.8 2.5L1 5.5" fill="none" stroke="#8393a3" stroke-width=".9"/></svg>
<svg style="position:absolute;left:49.90px;top:88.88px" width="9" height="7" viewBox="0 0 9 7"><path d="M0 .3h3.4l1 1.1H9v5.4H0z" fill="#8bc34a"/><circle cx="7" cy="5" r="1.8" fill="#d8e6ee" opacity=".5"/></svg>
<div class="t" style="left:62.90px;top:87.82px;font-size:8.1px;line-height:9.72px;color:#8b9bad;font-family:'Liberation Sans',sans-serif;">node_modules</div>
<svg style="position:absolute;left:41.10px;top:102.60px" width="5" height="6" viewBox="0 0 5 6"><path d="M1 .5l2.8 2.5L1 5.5" fill="none" stroke="#8393a3" stroke-width=".9"/></svg>
<svg style="position:absolute;left:49.90px;top:102.20px" width="9" height="7" viewBox="0 0 9 7"><path d="M0 .3h3.4l1 1.1H9v5.4H0z" fill="#2196f3"/><circle cx="7" cy="5" r="1.8" fill="#d8e6ee" opacity=".5"/></svg>
<div class="t" style="left:62.90px;top:101.14px;font-size:8.1px;line-height:9.72px;color:#8b9bad;font-family:'Liberation Sans',sans-serif;">public</div>
<svg style="position:absolute;left:41.10px;top:115.92px" width="5" height="6" viewBox="0 0 5 6"><path d="M1 .5l2.8 2.5L1 5.5" fill="none" stroke="#8393a3" stroke-width=".9"/></svg>
<svg style="position:absolute;left:49.90px;top:115.52px" width="9" height="7" viewBox="0 0 9 7"><path d="M0 .3h3.4l1 1.1H9v5.4H0z" fill="#4caf50"/><circle cx="7" cy="5" r="1.8" fill="#d8e6ee" opacity=".5"/></svg>
<div class="t" style="left:62.90px;top:114.46px;font-size:8.1px;line-height:9.72px;color:#e0555e;font-family:'Liberation Sans',sans-serif;">src</div>
<svg style="position:absolute;left:50.10px;top:128.04px" width="9" height="9" viewBox="0 0 9 9"><circle cx="4.5" cy="4.5" r="3.6" fill="none" stroke="#f5c518" stroke-width="1.6"/><path d="M4.5 2.2a2.3 2.3 0 0 1 0 4.6z" fill="#f5c518"/></svg>
<div class="t" style="left:62.90px;top:127.78px;font-size:8.1px;line-height:9.72px;color:#8b9bad;font-family:'Liberation Sans',sans-serif;">.browserslistrc</div>
<svg style="position:absolute;left:49.60px;top:142.06px" width="10" height="7" viewBox="0 0 10 7"><path fill="#1e8fd8" d="M0 3.5h7.2c.3-.4.8-.6 1.3-.5.1-.4.5-.6.8-.5-.1.5-.4.9-.8 1.1C8 5.7 6.7 7 4.2 7 2 7 .4 5.8 0 3.5z M1.5 2.3h1v1h-1zM2.8 2.3h1v1h-1zM4.1 2.3h1v1h-1zM5.4 2.3h1v1h-1zM2.8 1.1h1v1h-1zM4.1 1.1h1v1h-1zM5.4 1.1h1v1h-1zM4.1 0h1v1h-1z"/></svg>
<div class="t" style="left:62.90px;top:141.10px;font-size:8.1px;line-height:9.72px;color:#8b9bad;font-family:'Liberation Sans',sans-serif;">.dockerignore</div>
<svg style="position:absolute;left:50.60px;top:154.88px" width="8" height="8" viewBox="0 0 8 8"><path d="M1.2 0v8M4 0v8M6.8 0v8" stroke="#f2b81e" stroke-width=".9"/><path d="M0 5h2.4M2.8 2.5h2.4M5.6 5.5h2.4" stroke="#f2b81e" stroke-width="1.3"/></svg>
<div class="t" style="left:62.90px;top:154.42px;font-size:8.1px;line-height:9.72px;color:#8b9bad;font-family:'Liberation Sans',sans-serif;">.env</div>
<svg style="position:absolute;left:50.60px;top:168.20px" width="8" height="8" viewBox="0 0 8 8"><path d="M1.2 0v8M4 0v8M6.8 0v8" stroke="#f2b81e" stroke-width=".9"/><path d="M0 5h2.4M2.8 2.5h2.4M5.6 5.5h2.4" stroke="#f2b81e" stroke-width="1.3"/></svg>
<div class="t" style="left:62.90px;top:167.74px;font-size:8.1px;line-height:9.72px;color:#8b9bad;font-family:'Liberation Sans',sans-serif;">.env.development</div>
<svg style="position:absolute;left:50.10px;top:181.02px" width="9" height="9" viewBox="0 0 9 9"><circle cx="4.5" cy="4.5" r="4.2" fill="#3a55b4"/><circle cx="4.5" cy="4.5" r="2.3" fill="none" stroke="#a9bcf5" stroke-width="1"/></svg>
<div class="t" style="left:62.90px;top:181.06px;font-size:8.1px;line-height:9.72px;color:#8b9bad;font-family:'Liberation Sans',sans-serif;">.eslintrc.js</div>
<svg style="position:absolute;left:50.10px;top:194.54px" width="9" height="9" viewBox="0 0 9 9"><path d="M4.5 0L9 4.5 4.5 9 0 4.5z" fill="#e64a19"/><circle cx="4.2" cy="3" r=".9" fill="#011627"/><circle cx="4.2" cy="6.2" r=".9" fill="#011627"/></svg>
<div class="t" style="left:62.90px;top:194.38px;font-size:8.1px;line-height:9.72px;color:#8b9bad;font-family:'Liberation Sans',sans-serif;">.gitignore</div>
<svg style="position:absolute;left:50.10px;top:207.46px" width="9" height="10" viewBox="0 0 9 10"><path d="M.5 .3H5.2C7.4 .3 8.6 1.6 8.6 3.3S7.4 6.3 5.2 6.3H3.2V9.6H.5z M3.2 2.4V4.2H5C5.6 4.2 5.9 3.8 5.9 3.3S5.6 2.4 5 2.4z" fill="#c77dba" fill-rule="evenodd"/><path d="M.5 .3H5.2V1.3H.5z" fill="#56b3b4"/><path d="M5.2 1.3H8.2V2.3H5.2z" fill="#f7ba3e"/><path d="M.5 2.3H3.2V3.3H.5zM5.9 3.3H8.6V4.3H5.9z" fill="#ea5e5e"/><path d="M.5 4.3H3.2V5.3H.5z" fill="#56b3b4"/><path d="M3.2 5.3H7.4V6.3H3.2z" fill="#f7ba3e"/><path d="M.5 6.3H3.2V7.3H.5z" fill="#ea5e5e"/><path d="M.5 8.3H3.2V9.6H.5z" fill="#56b3b4"/></svg>
<div class="t" style="left:62.90px;top:207.70px;font-size:8.1px;line-height:9.72px;color:#8b9bad;font-family:'Liberation Sans',sans-serif;">.prettierrc</div>
<svg style="position:absolute;left:50.10px;top:220.78px" width="9" height="10" viewBox="0 0 9 10"><path d="M.5 .3H5.2C7.4 .3 8.6 1.6 8.6 3.3S7.4 6.3 5.2 6.3H3.2V9.6H.5z M3.2 2.4V4.2H5C5.6 4.2 5.9 3.8 5.9 3.3S5.6 2.4 5 2.4z" fill="#c77dba" fill-rule="evenodd"/><path d="M.5 .3H5.2V1.3H.5z" fill="#56b3b4"/><path d="M5.2 1.3H8.2V2.3H5.2z" fill="#f7ba3e"/><path d="M.5 2.3H3.2V3.3H.5zM5.9 3.3H8.6V4.3H5.9z" fill="#ea5e5e"/><path d="M.5 4.3H3.2V5.3H.5z" fill="#56b3b4"/><path d="M3.2 5.3H7.4V6.3H3.2z" fill="#f7ba3e"/><path d="M.5 6.3H3.2V7.3H.5z" fill="#ea5e5e"/><path d="M.5 8.3H3.2V9.6H.5z" fill="#56b3b4"/></svg>
<div class="t" style="left:62.90px;top:221.02px;font-size:8.1px;line-height:9.72px;color:#8b9bad;font-family:'Liberation Sans',sans-serif;">.prettierrc.js</div>
<svg style="position:absolute;left:50.60px;top:234.30px" width="9" height="9.5" viewBox="0 0 9 9.5"><path d="M3.6 1.2C5.6 .4 8.2 .6 7.6 2.6C7.3 3.6 6.2 4.2 5.2 4.5C6.6 4.6 7.4 5.4 6.9 6.7C6.2 8.5 3.4 9 1.2 8.6M3.6 1.6L1.8 8.4M1.4 4.9C3 4.4 4.6 4.4 5.4 4.5" fill="none" stroke="#f5c518" stroke-width="1.1"/></svg>
<div class="t" style="left:62.90px;top:234.34px;font-size:8.1px;line-height:9.72px;color:#8b9bad;font-family:'Liberation Sans',sans-serif;">babel.config.js</div>
<svg style="position:absolute;left:49.40px;top:247.52px" width="11" height="9.5" viewBox="0 0 11 9.5"><g fill="none" stroke="#f2b81e" stroke-width="1.15"><path d="M2.8 .8C1.6 .8 1.6 1.6 1.6 2.6V3.8L.6 4.7L1.6 5.6V6.9C1.6 7.9 1.6 8.7 2.8 8.7M8.2 .8C9.4 .8 9.4 1.6 9.4 2.6V3.8L10.4 4.7L9.4 5.6V6.9C9.4 7.9 9.4 8.7 8.2 8.7"/></g><path d="M4 7.6H7" stroke="#f2b81e" stroke-width="1"/></svg>
<div class="t" style="left:62.90px;top:247.66px;font-size:8.1px;line-height:9.72px;color:#8b9bad;font-family:'Liberation Sans',sans-serif;">cypress.json</div>
<svg style="position:absolute;left:50.40px;top:261.44px" width="8" height="8" viewBox="0 0 8 8"><rect width="8" height="8" fill="#f2cf1e"/><text x="6.6" y="7.2" text-anchor="end" font-size="3.6" font-family="Liberation Sans" font-weight="bold" fill="#332">JS</text></svg>
<div class="t" style="left:62.90px;top:260.98px;font-size:8.1px;line-height:9.72px;color:#8b9bad;font-family:'Liberation Sans',sans-serif;">db.js</div>
<svg style="position:absolute;left:49.40px;top:274.16px" width="11" height="9.5" viewBox="0 0 11 9.5"><g fill="none" stroke="#f2b81e" stroke-width="1.15"><path d="M2.8 .8C1.6 .8 1.6 1.6 1.6 2.6V3.8L.6 4.7L1.6 5.6V6.9C1.6 7.9 1.6 8.7 2.8 8.7M8.2 .8C9.4 .8 9.4 1.6 9.4 2.6V3.8L10.4 4.7L9.4 5.6V6.9C9.4 7.9 9.4 8.7 8.2 8.7"/></g><path d="M4 7.6H7" stroke="#f2b81e" stroke-width="1"/></svg>
<div class="t" style="left:62.90px;top:274.30px;font-size:8.1px;line-height:9.72px;color:#8b9bad;font-family:'Liberation Sans',sans-serif;">db.json</div>
<svg style="position:absolute;left:49.40px;top:287.48px" width="11" height="9.5" viewBox="0 0 11 9.5"><g fill="none" stroke="#e53935" stroke-width="1.15"><path d="M2.8 .8C1.6 .8 1.6 1.6 1.6 2.6V3.8L.6 4.7L1.6 5.6V6.9C1.6 7.9 1.6 8.7 2.8 8.7M8.2 .8C9.4 .8 9.4 1.6 9.4 2.6V3.8L10.4 4.7L9.4 5.6V6.9C9.4 7.9 9.4 8.7 8.2 8.7"/></g><path d="M4 7.6H7" stroke="#e53935" stroke-width="1"/></svg>
<div class="t" style="left:62.90px;top:287.62px;font-size:8.1px;line-height:9.72px;color:#8b9bad;font-family:'Liberation Sans',sans-serif;">docker-compose.debug.yml</div>
<svg style="position:absolute;left:49.60px;top:301.90px" width="10" height="7" viewBox="0 0 10 7"><path fill="#1e8fd8" d="M0 3.5h7.2c.3-.4.8-.6 1.3-.5.1-.4.5-.6.8-.5-.1.5-.4.9-.8 1.1C8 5.7 6.7 7 4.2 7 2 7 .4 5.8 0 3.5z M1.5 2.3h1v1h-1zM2.8 2.3h1v1h-1zM4.1 2.3h1v1h-1zM5.4 2.3h1v1h-1zM2.8 1.1h1v1h-1zM4.1 1.1h1v1h-1zM5.4 1.1h1v1h-1zM4.1 0h1v1h-1z"/></svg>
<div class="t" style="left:62.90px;top:300.94px;font-size:8.1px;line-height:9.72px;color:#8b9bad;font-family:'Liberation Sans',sans-serif;">docker-compose.yml</div>
<svg style="position:absolute;left:49.60px;top:315.22px" width="10" height="7" viewBox="0 0 10 7"><path fill="#1e8fd8" d="M0 3.5h7.2c.3-.4.8-.6 1.3-.5.1-.4.5-.6.8-.5-.1.5-.4.9-.8 1.1C8 5.7 6.7 7 4.2 7 2 7 .4 5.8 0 3.5z M1.5 2.3h1v1h-1zM2.8 2.3h1v1h-1zM4.1 2.3h1v1h-1zM5.4 2.3h1v1h-1zM2.8 1.1h1v1h-1zM4.1 1.1h1v1h-1zM5.4 1.1h1v1h-1zM4.1 0h1v1h-1z"/></svg>
<div class="t" style="left:62.90px;top:314.26px;font-size:8.1px;line-height:9.72px;color:#8b9bad;font-family:'Liberation Sans',sans-serif;">Dockerfile</div>
<svg style="position:absolute;left:50.10px;top:327.54px" width="9" height="9" viewBox="0 0 9 9"><path d="M4.5.4l3.8 2.2v4.4L4.5 9.2.7 7V2.6z" fill="none" stroke="#7cb342" stroke-width=".9"/><text x="4.5" y="6.3" text-anchor="middle" font-size="4" font-family="Liberation Sans" font-weight="bold" fill="#7cb342">JS</text></svg>
<div class="t" style="left:62.90px;top:327.58px;font-size:8.1px;line-height:9.72px;color:#8b9bad;font-family:'Liberation Sans',sans-serif;">package-lock.json</div>
<svg style="position:absolute;left:50.10px;top:340.86px" width="9" height="9" viewBox="0 0 9 9"><path d="M4.5.4l3.8 2.2v4.4L4.5 9.2.7 7V2.6z" fill="none" stroke="#7cb342" stroke-width=".9"/><text x="4.5" y="6.3" text-anchor="middle" font-size="4" font-family="Liberation Sans" font-weight="bold" fill="#7cb342">JS</text></svg>
<div class="t" style="left:62.90px;top:340.90px;font-size:8.1px;line-height:9.72px;color:#8b9bad;font-family:'Liberation Sans',sans-serif;">package.json</div>
<svg style="position:absolute;left:209.00px;top:36.10px" width="5" height="5" viewBox="0 0 5 5"><circle cx="2.5" cy="2.5" r="2.2" fill="#1a6a98"/></svg>
<svg style="position:absolute;left:209.00px;top:115.80px" width="5" height="5" viewBox="0 0 5 5"><circle cx="2.5" cy="2.5" r="2.2" fill="#8f4452"/></svg>
<div style="position:absolute;left:223.00px;top:10.50px;width:75.10px;height:21.70px;background:#0b2942;"></div>
<div style="position:absolute;left:223.30px;top:10.50px;width:74.80px;height:0.80px;background:#123d5e;"></div>
<div style="position:absolute;left:223.00px;top:31.40px;width:75.10px;height:0.80px;background:#27a878;"></div>
<svg style="position:absolute;left:229.40px;top:17.90px" width="8" height="7" viewBox="0 0 8 7"><path d="M0 0h2.2L4 3 5.8 0H8L4 7z" fill="#41b883"/></svg>
<div class="t" style="left:241.80px;top:17.88px;font-size:8.2px;line-height:9.84px;color:#d8e0e8;font-family:'Liberation Sans',sans-serif;">heroes.vue</div>
<svg style="position:absolute;left:286.60px;top:18.80px" width="6" height="6" viewBox="0 0 6 6"><path d="M.5.5l5 5M5.5.5l-5 5" stroke="#c4ceda" stroke-width=".9"/></svg>
<div style="position:absolute;left:221.00px;top:10.50px;width:0.90px;height:339.50px;background:#0c1d2b;"></div>
<svg style="position:absolute;left:591.60px;top:17.00px" width="10" height="9" viewBox="0 0 10 9"><g fill="none" stroke="#9aa9b8" stroke-width=".9"><path d="M1.8 1.2V6.6M7.6 2.4V7.8M1.8 2.6H5.2M4 1.3L5.3 2.6L4 3.9M7.6 6.4H4.4M5.6 5.1L4.3 6.4L5.6 7.7"/><circle cx="1.8" cy="7.6" r="1"/><circle cx="7.6" cy="1.4" r="1"/></g></svg>
<svg style="position:absolute;left:611.60px;top:16.80px" width="9" height="9" viewBox="0 0 9 9"><rect x=".6" y=".6" width="7.8" height="8" rx="1" fill="none" stroke="#9aa9b8" stroke-width=".9"/><path d="M4.5 .6v8" stroke="#9aa9b8" stroke-width=".9"/></svg>
<svg style="position:absolute;left:630.60px;top:20.00px" width="9" height="3" viewBox="0 0 9 3"><circle cx="1.2" cy="1.5" r=".8" fill="#9aa9b8"/><circle cx="4.5" cy="1.5" r=".8" fill="#9aa9b8"/><circle cx="7.8" cy="1.5" r=".8" fill="#9aa9b8"/></svg>
<div style="position:absolute;left:584.60px;top:12.50px;width:0.70px;height:19.00px;background:#0a1f30;"></div>
<div class="t" style="left:232.10px;top:34.58px;font-size:8.2px;line-height:9.84px;color:#8d9db0;font-family:'Liberation Sans',sans-serif;">src</div>
<svg style="position:absolute;left:246.40px;top:36.10px" width="4" height="7" viewBox="0 0 4 7"><path d="M.6.6l2.6 2.9-2.6 2.9" fill="none" stroke="#8d9db0" stroke-width=".8"/></svg>
<div class="t" style="left:253.40px;top:34.58px;font-size:8.2px;line-height:9.84px;color:#8d9db0;font-family:'Liberation Sans',sans-serif;">views</div>
<svg style="position:absolute;left:276.10px;top:36.10px" width="4" height="7" viewBox="0 0 4 7"><path d="M.6.6l2.6 2.9-2.6 2.9" fill="none" stroke="#8d9db0" stroke-width=".8"/></svg>
<div class="t" style="left:282.90px;top:34.58px;font-size:8.2px;line-height:9.84px;color:#8d9db0;font-family:'Liberation Sans',sans-serif;">heroes</div>
<svg style="position:absolute;left:309.80px;top:36.10px" width="4" height="7" viewBox="0 0 4 7"><path d="M.6.6l2.6 2.9-2.6 2.9" fill="none" stroke="#8d9db0" stroke-width=".8"/></svg>
<svg style="position:absolute;left:318.10px;top:35.80px" width="8" height="7" viewBox="0 0 8 7"><path d="M0 0h2.2L4 3 5.8 0H8L4 7z" fill="#41b883"/></svg>
<div class="t" style="left:329.60px;top:34.58px;font-size:8.2px;line-height:9.84px;color:#8d9db0;font-family:'Liberation Sans',sans-serif;">heroes.vue</div>
<svg style="position:absolute;left:373.60px;top:36.10px" width="4" height="7" viewBox="0 0 4 7"><path d="M.6.6l2.6 2.9-2.6 2.9" fill="none" stroke="#8d9db0" stroke-width=".8"/></svg>
<div class="t" style="left:379.90px;top:34.58px;font-size:8.2px;line-height:9.84px;color:#8d9db0;font-family:'Liberation Sans',sans-serif;">{</div>
<div class="t" style="left:384.40px;top:34.58px;font-size:8.2px;line-height:9.84px;color:#8d9db0;font-family:'Liberation Sans',sans-serif;">}</div>
<div class="t" style="left:388.90px;top:34.58px;font-size:8.2px;line-height:9.84px;color:#8d9db0;font-family:'Liberation Sans',sans-serif;">"heroes.vue"</div>
<div style="position:absolute;left:223.30px;top:44.90px;width:422.80px;height:0.60px;background:#0a2132;"></div>
<div class="t" style="left:243.14px;top:49.27px;font-size:9.38px;line-height:11.26px;color:#1b93cf;font-family:'Liberation Mono',monospace;width:11.26px;text-align:right;">80</div>
<div class="t" style="left:270.40px;top:49.27px;font-size:9.38px;line-height:11.26px;color:#c8d0da;font-family:'Liberation Mono',monospace;white-space:pre;"><span style="color:#c8d0da;">&nbsp;&nbsp;&nbsp;&nbsp;&nbsp;&nbsp;&nbsp;&nbsp;</span><span style="color:#c8d0da;font-style:italic;">captains</span><span style="color:#a9b6c4;">.</span><span style="color:#7e9ed6;font-style:italic;">log</span><span style="color:#a9b6c4;">(</span><span style="color:#9ccf9a;">`You&nbsp;said&nbsp;you&nbsp;want&nbsp;to&nbsp;delete&nbsp;</span><span style="color:#c9459f;">${</span><span style="color:#22a3e0;font-style:italic;">this</span><span style="color:#a9b6c4;">.</span><span style="color:#d3cd9c;font-style:italic;">heroToDelete</span><span style="color:#a9b6c4;">}`);</span></div>
<div class="t" style="left:243.14px;top:64.39px;font-size:9.38px;line-height:11.26px;color:#1b93cf;font-family:'Liberation Mono',monospace;width:11.26px;text-align:right;">81</div>
<div class="t" style="left:270.40px;top:64.39px;font-size:9.38px;line-height:11.26px;color:#c8d0da;font-family:'Liberation Mono',monospace;white-space:pre;"><span style="color:#c8d0da;">&nbsp;&nbsp;&nbsp;&nbsp;&nbsp;&nbsp;&nbsp;&nbsp;</span><span style="color:#22a3e0;font-style:italic;">this</span><span style="color:#a9b6c4;">.</span><span style="color:#7e9ed6;font-style:italic;">deleteHeroAction</span><span style="color:#a9b6c4;">(</span><span style="color:#22a3e0;font-style:italic;">this</span><span style="color:#a9b6c4;">.</span><span style="color:#4fb3a4;font-style:italic;">heroToDelete</span><span style="color:#a9b6c4;">);</span></div>
<div class="t" style="left:243.14px;top:79.51px;font-size:9.38px;line-height:11.26px;color:#1b93cf;font-family:'Liberation Mono',monospace;width:11.26px;text-align:right;">82</div>
<div class="t" style="left:270.40px;top:79.51px;font-size:9.38px;line-height:11.26px;color:#c8d0da;font-family:'Liberation Mono',monospace;white-space:pre;"><span style="color:#a9b6c4;">&nbsp;&nbsp;&nbsp;&nbsp;&nbsp;&nbsp;}</span></div>
<div class="t" style="left:243.14px;top:94.63px;font-size:9.38px;line-height:11.26px;color:#1b93cf;font-family:'Liberation Mono',monospace;width:11.26px;text-align:right;">83</div>
<div class="t" style="left:270.40px;top:94.63px;font-size:9.38px;line-height:11.26px;color:#c8d0da;font-family:'Liberation Mono',monospace;white-space:pre;"><span style="color:#c8d0da;">&nbsp;&nbsp;&nbsp;&nbsp;&nbsp;&nbsp;</span><span style="color:#22a3e0;font-style:italic;">this</span><span style="color:#a9b6c4;">.</span><span style="color:#7e9ed6;font-style:italic;">clear</span><span style="color:#a9b6c4;">();</span></div>
<div class="t" style="left:243.14px;top:109.75px;font-size:9.38px;line-height:11.26px;color:#1b93cf;font-family:'Liberation Mono',monospace;width:11.26px;text-align:right;">84</div>
<div class="t" style="left:270.40px;top:109.75px;font-size:9.38px;line-height:11.26px;color:#c8d0da;font-family:'Liberation Mono',monospace;white-space:pre;"><span style="color:#a9b6c4;">&nbsp;&nbsp;&nbsp;&nbsp;},</span></div>
<div class="t" style="left:243.14px;top:124.87px;font-size:9.38px;line-height:11.26px;color:#1b93cf;font-family:'Liberation Mono',monospace;width:11.26px;text-align:right;">85</div>
<div class="t" style="left:270.40px;top:124.87px;font-size:9.38px;line-height:11.26px;color:#c8d0da;font-family:'Liberation Mono',monospace;white-space:pre;"><span style="color:#c8d0da;">&nbsp;&nbsp;&nbsp;&nbsp;</span><span style="color:#7e9ed6;font-style:italic;">getHeroes</span><span style="color:#a9b6c4;">()&nbsp;{</span></div>
<div class="t" style="left:243.14px;top:139.99px;font-size:9.38px;line-height:11.26px;color:#1b93cf;font-family:'Liberation Mono',monospace;width:11.26px;text-align:right;">86</div>
<div class="t" style="left:270.40px;top:139.99px;font-size:9.38px;line-height:11.26px;color:#c8d0da;font-family:'Liberation Mono',monospace;white-space:pre;"><span style="color:#c8d0da;">&nbsp;&nbsp;&nbsp;&nbsp;&nbsp;&nbsp;</span><span style="color:#22a3e0;font-style:italic;">this</span><span style="color:#a9b6c4;">.</span><span style="color:#7e9ed6;font-style:italic;">getHeroesAction</span><span style="color:#a9b6c4;">();</span></div>
<div class="t" style="left:243.14px;top:155.11px;font-size:9.38px;line-height:11.26px;color:#1b93cf;font-family:'Liberation Mono',monospace;width:11.26px;text-align:right;">87</div>
<div class="t" style="left:270.40px;top:155.11px;font-size:9.38px;line-height:11.26px;color:#c8d0da;font-family:'Liberation Mono',monospace;white-space:pre;"><span style="color:#c8d0da;">&nbsp;&nbsp;&nbsp;&nbsp;&nbsp;&nbsp;</span><span style="color:#22a3e0;font-style:italic;">this</span><span style="color:#a9b6c4;">.</span><span style="color:#7e9ed6;font-style:italic;">clear</span><span style="color:#a9b6c4;">();</span></div>
<div class="t" style="left:243.14px;top:170.23px;font-size:9.38px;line-height:11.26px;color:#1b93cf;font-family:'Liberation Mono',monospace;width:11.26px;text-align:right;">88</div>
<div class="t" style="left:270.40px;top:170.23px;font-size:9.38px;line-height:11.26px;color:#c8d0da;font-family:'Liberation Mono',monospace;white-space:pre;"><span style="color:#a9b6c4;">&nbsp;&nbsp;&nbsp;&nbsp;},</span></div>
<div class="t" style="left:243.14px;top:185.35px;font-size:9.38px;line-height:11.26px;color:#1b93cf;font-family:'Liberation Mono',monospace;width:11.26px;text-align:right;">89</div>
<div class="t" style="left:270.40px;top:185.35px;font-size:9.38px;line-height:11.26px;color:#c8d0da;font-family:'Liberation Mono',monospace;white-space:pre;"><span style="color:#c8d0da;">&nbsp;&nbsp;&nbsp;&nbsp;</span><span style="color:#7e9ed6;font-style:italic;">save</span><span style="color:#a9b6c4;">(</span><span style="color:#c8d0da;">hero</span><span style="color:#a9b6c4;">)&nbsp;{</span></div>
<div class="t" style="left:243.14px;top:200.47px;font-size:9.38px;line-height:11.26px;color:#1b93cf;font-family:'Liberation Mono',monospace;width:11.26px;text-align:right;">90</div>
<div class="t" style="left:270.40px;top:200.47px;font-size:9.38px;line-height:11.26px;color:#c8d0da;font-family:'Liberation Mono',monospace;white-space:pre;"><span style="color:#c8d0da;">&nbsp;&nbsp;&nbsp;&nbsp;&nbsp;&nbsp;</span><span style="color:#c8d0da;font-style:italic;">captains</span><span style="color:#a9b6c4;">.</span><span style="color:#7e9ed6;font-style:italic;">log</span><span style="color:#a9b6c4;">(</span><span style="color:#9ccf9a;">'hero&nbsp;changed'</span><span style="color:#a9b6c4;">,&nbsp;</span><span style="color:#c8d0da;">hero</span><span style="color:#a9b6c4;">);</span></div>
<div class="t" style="left:243.14px;top:215.59px;font-size:9.38px;line-height:11.26px;color:#1b93cf;font-family:'Liberation Mono',monospace;width:11.26px;text-align:right;">91</div>
<div class="t" style="left:270.40px;top:215.59px;font-size:9.38px;line-height:11.26px;color:#c8d0da;font-family:'Liberation Mono',monospace;white-space:pre;"><span style="color:#c8d0da;">&nbsp;&nbsp;&nbsp;&nbsp;&nbsp;&nbsp;</span><span style="color:#c8d0da;font-style:italic;">hero</span><span style="color:#a9b6c4;">.</span><span style="color:#3fae95;font-style:italic;">id</span><span style="color:#4fb3a4;">&nbsp;?&nbsp;</span><span style="color:#22a3e0;font-style:italic;">this</span><span style="color:#a9b6c4;">.</span><span style="color:#7e9ed6;font-style:italic;">updateHeroAction</span><span style="color:#a9b6c4;">(</span><span style="color:#c8d0da;">hero</span><span style="color:#a9b6c4;">)&nbsp;</span><span style="color:#4fb3a4;">:</span><span style="color:#a9b6c4;">&nbsp;</span><span style="color:#22a3e0;font-style:italic;">this</span><span style="color:#a9b6c4;">.</span><span style="color:#7e9ed6;font-style:italic;">addHeroAction</span><span style="color:#a9b6c4;">(</span><span style="color:#c8d0da;text-decoration:underline;">hero</span><span style="color:#a9b6c4;">);</span></div>
<div class="t" style="left:243.14px;top:230.71px;font-size:9.38px;line-height:11.26px;color:#1b93cf;font-family:'Liberation Mono',monospace;width:11.26px;text-align:right;">92</div>
<div class="t" style="left:270.40px;top:230.71px;font-size:9.38px;line-height:11.26px;color:#c8d0da;font-family:'Liberation Mono',monospace;white-space:pre;"><span style="color:#a9b6c4;">&nbsp;&nbsp;&nbsp;&nbsp;},</span></div>
<div class="t" style="left:243.14px;top:245.83px;font-size:9.38px;line-height:11.26px;color:#1b93cf;font-family:'Liberation Mono',monospace;width:11.26px;text-align:right;">93</div>
<div class="t" style="left:270.40px;top:245.83px;font-size:9.38px;line-height:11.26px;color:#c8d0da;font-family:'Liberation Mono',monospace;white-space:pre;"><span style="color:#c8d0da;">&nbsp;&nbsp;&nbsp;&nbsp;</span><span style="color:#7e9ed6;font-style:italic;">select</span><span style="color:#a9b6c4;">(</span><span style="color:#c8d0da;">hero</span><span style="color:#a9b6c4;">)&nbsp;{</span></div>
<div style="position:absolute;left:270.20px;top:46.50px;width:0.70px;height:204.00px;background:#0f2c42;"></div>
<div style="position:absolute;left:281.70px;top:46.50px;width:0.70px;height:204.00px;background:#0f2c42;"></div>
<div style="position:absolute;left:293.10px;top:45.50px;width:0.70px;height:62.26px;background:#0f2c42;"></div>
<div style="position:absolute;left:293.10px;top:138.12px;width:0.70px;height:30.12px;background:#0f2c42;"></div>
<div style="position:absolute;left:293.10px;top:198.60px;width:0.70px;height:30.12px;background:#0f2c42;"></div>
<div style="position:absolute;left:304.60px;top:45.50px;width:0.70px;height:32.02px;background:#0f2c42;"></div>
<div style="position:absolute;left:270.20px;top:243.80px;width:295.60px;height:6.50px;background:rgba(18,70,115,0.6);"></div>
<div style="position:absolute;left:637.90px;top:190.00px;width:8.20px;height:24.10px;background:#0b3050;"></div>
<div style="position:absolute;left:637.70px;top:45.50px;width:0.70px;height:205.00px;background:#0a2033;"></div>
<div style="position:absolute;left:642.90px;top:47.50px;width:3.20px;height:3.30px;background:#e0283a;"></div>
<div style="position:absolute;left:642.90px;top:65.80px;width:3.20px;height:3.30px;background:#e0283a;"></div>
<div style="position:absolute;left:223.00px;top:250.10px;width:423.10px;height:99.80px;background:#011627;"></div>
<div style="position:absolute;left:223.00px;top:250.10px;width:423.10px;height:0.90px;background:#2a9d73;"></div>
<div class="t" style="left:234.60px;top:257.84px;font-size:6.6px;line-height:7.92px;color:#7d8fa3;font-family:'Liberation Sans',sans-serif;">PROBLEMS</div>
<svg style="position:absolute;left:275.70px;top:256.40px" width="11" height="11" viewBox="0 0 11 11"><circle cx="5.5" cy="5.5" r="5.2" fill="#1c98d8"/><text x="5.5" y="7.9" text-anchor="middle" font-size="6.6" font-family="Liberation Sans" fill="#e8f4fc">2</text></svg>
<div class="t" style="left:298.40px;top:257.84px;font-size:6.6px;line-height:7.92px;color:#7d8fa3;font-family:'Liberation Sans',sans-serif;">OUTPUT</div>
<div class="t" style="left:337.90px;top:257.84px;font-size:6.6px;line-height:7.92px;color:#7d8fa3;font-family:'Liberation Sans',sans-serif;">DEBUG CONSOLE</div>
<div style="position:absolute;left:404.60px;top:253.30px;width:35.50px;height:16.20px;background:transparent;border:1px solid #0d2d45;"></div>
<div class="t" style="left:406.10px;top:257.84px;font-size:6.6px;line-height:7.92px;color:#26a2e0;font-family:'Liberation Sans',sans-serif;">TERMINAL</div>
<div style="position:absolute;left:448.60px;top:255.50px;width:93.80px;height:11.60px;background:#3b3f44;border-radius:2.5px;"></div>
<div class="t" style="left:453.60px;top:257.42px;font-size:6.8px;line-height:8.16px;color:#d8dde3;font-family:'Liberation Sans',sans-serif;">1: zsh</div>
<svg style="position:absolute;left:534.80px;top:257.30px" width="5" height="8" viewBox="0 0 5 8"><path d="M.5 3.2L2.5 .8l2 2.4zM.5 4.8l2 2.4 2-2.4z" fill="#c8d0d8"/></svg>
<svg style="position:absolute;left:552.10px;top:257.00px" width="9" height="9" viewBox="0 0 9 9"><path d="M4.5 .5v8M.5 4.5h8" stroke="#a9b6c3" stroke-width=".9"/></svg>
<svg style="position:absolute;left:572.30px;top:256.80px" width="9" height="9" viewBox="0 0 9 9"><rect x=".5" y=".5" width="8" height="8" rx=".8" fill="none" stroke="#a9b6c3" stroke-width=".9"/><path d="M4.5 .5v8" stroke="#a9b6c3" stroke-width=".9"/></svg>
<svg style="position:absolute;left:591.30px;top:256.50px" width="9" height="10" viewBox="0 0 9 10"><path d="M1 2h7M3.2 2V1h2.6v1M1.8 2.5l.5 6.8h4.4l.5-6.8" fill="none" stroke="#a9b6c3" stroke-width=".8"/><path d="M3.6 3.5v4.8M5.4 3.5v4.8" stroke="#a9b6c3" stroke-width=".6"/></svg>
<svg style="position:absolute;left:610.90px;top:258.50px" width="9" height="6" viewBox="0 0 9 6"><path d="M.8 5l3.7-3.7L8.2 5" fill="none" stroke="#a9b6c3" stroke-width=".9"/></svg>
<svg style="position:absolute;left:630.60px;top:257.50px" width="8" height="8" viewBox="0 0 8 8"><path d="M.8.8l6.4 6.4M7.2.8L.8 7.2" stroke="#a9b6c3" stroke-width=".9"/></svg>
<div class="t" style="left:235.00px;top:298.17px;font-size:7.55px;line-height:9.06px;color:#2d8de0;font-family:'Liberation Mono',monospace;font-weight:bold;">~/_git/heroes-vue</div>
<div class="t" style="left:321.10px;top:298.26px;font-size:7.4px;line-height:8.88px;color:#1f9e6f;font-family:'Liberation Mono',monospace;font-weight:bold;">master</div>
<div class="t" style="left:353.40px;top:298.14px;font-size:7.6px;line-height:9.12px;color:#d23030;font-family:'Liberation Mono',monospace;font-weight:bold;">✗</div>
<svg style="position:absolute;left:234.50px;top:310.80px" width="4" height="5" viewBox="0 0 4 5"><path d="M0 0L4 2.5L0 5z" fill="#d8dfe6"/></svg>
<div style="position:absolute;left:239.70px;top:306.50px;width:4.10px;height:10.50px;background:#d6dce2;"></div>
<div class="t" style="left:597.90px;top:297.64px;font-size:8.6px;line-height:10.32px;color:#c4ccd4;font-family:'Liberation Sans',sans-serif;">5d</div>
<svg style="position:absolute;left:611.50px;top:299.10px" width="5" height="6" viewBox="0 0 5 6"><path d="M.5 .4v5.4" stroke="#d6b000" stroke-width=".8"/><path d="M.8 .4H4.6L3.8 1.9L4.6 3.4H.8z" fill="#f2d20a"/></svg>
<svg style="position:absolute;left:66.90px;top:352.10px" width="9" height="9" viewBox="0 0 9 9"><path d="M1.3 4.2a3.3 3.3 0 0 1 5.9-1.6M7.7 4.8a3.3 3.3 0 0 1-5.9 1.6" fill="none" stroke="#0a2a1c" stroke-width="1.1"/><path d="M7.6.8v2.5H5.1M1.4 8.2V5.7h2.5" fill="none" stroke="#0a2a1c" stroke-width="1"/></svg>
<svg style="position:absolute;left:84.10px;top:352.10px" width="9" height="9" viewBox="0 0 9 9"><circle cx="4.5" cy="4.5" r="4.3" fill="#0a2a1c"/><path d="M2.8 2.8l3.4 3.4M6.2 2.8L2.8 6.2" stroke="#17c285" stroke-width="1"/></svg>
<div class="t" style="left:95.30px;top:352.24px;font-size:7.6px;line-height:9.12px;color:#0a2a1c;font-family:'Liberation Sans',sans-serif;">2</div>
<svg style="position:absolute;left:100.90px;top:351.70px" width="9" height="9" viewBox="0 0 9 9"><path d="M4.5.3L8.8 8.5H.2z" fill="#0a2a1c"/><path d="M4.5 3.2v2.6M4.5 6.6v.9" stroke="#17c285" stroke-width="1"/></svg>
<div class="t" style="left:112.20px;top:352.24px;font-size:7.6px;line-height:9.12px;color:#0a2a1c;font-family:'Liberation Sans',sans-serif;">0</div>
<svg style="position:absolute;left:125.10px;top:352.00px" width="9" height="9" viewBox="0 0 9 9"><path fill="#0a2a1c" transform="scale(.5625)" d="M8 .2a8 8 0 0 0-2.53 15.59c.4.07.55-.17.55-.38v-1.4c-2.23.48-2.7-1.07-2.7-1.07-.36-.92-.89-1.17-.89-1.17-.73-.5.05-.49.05-.49.8.06 1.23.83 1.23.83.71 1.23 1.87.87 2.33.67.07-.52.28-.87.5-1.07-1.78-.2-3.65-.89-3.65-3.96 0-.87.31-1.59.83-2.150-.08-.2-.36-1.02.08-2.12 0 0 .67-.22 2.2.82a7.6 7.6 0 0 1 4 0c1.530-1.04 2.2-.82 2.2-.82.44 1.1.16 1.92.08 2.12.51.56.82 1.280.82 2.15 0 3.08-1.87 3.76-3.66 3.96.29.25.54.73.54 1.48v2.2c0 .21.15.46.55.38A8 8 0 0 0 8 .2z"/></svg>
<div class="t" style="left:135.80px;top:352.24px;font-size:7.6px;line-height:9.12px;color:#0a2a1c;font-family:'Liberation Sans',sans-serif;">johnpapa</div>
<svg style="position:absolute;left:175.40px;top:351.50px" width="8" height="9.5" viewBox="0 0 8 9.5"><ellipse cx="4" cy="1.7" rx="3.4" ry="1.4" fill="none" stroke="#0a2a1c" stroke-width="1"/><path d="M.6 1.7v6c0 .8 1.5 1.4 3.4 1.4s3.4-.6 3.4-1.4v-6M.6 4.7c0 .8 1.5 1.4 3.4 1.4s3.4-.6 3.4-1.4" fill="none" stroke="#0a2a1c" stroke-width="1"/></svg>
<div class="t" style="left:185.40px;top:352.24px;font-size:7.6px;line-height:9.12px;color:#0a2a1c;font-family:'Liberation Sans',sans-serif;">#42b883</div>
<div class="t" style="left:447.60px;top:352.24px;font-size:7.6px;line-height:9.12px;color:#0a2a1c;font-family:'Liberation Sans',sans-serif;">Ln 99, Col 1</div>
<div class="t" style="left:496.60px;top:352.24px;font-size:7.6px;line-height:9.12px;color:#0a2a1c;font-family:'Liberation Sans',sans-serif;">Spaces: 2</div>
<div class="t" style="left:539.10px;top:352.24px;font-size:7.6px;line-height:9.12px;color:#0a2a1c;font-family:'Liberation Sans',sans-serif;">UTF-8</div>
<div class="t" style="left:570.70px;top:352.24px;font-size:7.6px;line-height:9.12px;color:#0a2a1c;font-family:'Liberation Sans',sans-serif;">LF</div>
<div class="t" style="left:588.80px;top:352.24px;font-size:7.6px;line-height:9.12px;color:#0a2a1c;font-family:'Liberation Sans',sans-serif;">Vue</div>
<svg style="position:absolute;left:611.60px;top:352.00px" width="9" height="9" viewBox="0 0 9 9"><circle cx="4.5" cy="4.5" r="4.2" fill="#0a2a1c"/><circle cx="3" cy="3.6" r=".7" fill="#17c285"/><circle cx="6" cy="3.6" r=".7" fill="#17c285"/><path d="M2.3 5.3a2.3 2.3 0 0 0 4.4 0z" fill="#17c285"/></svg>
<svg style="position:absolute;left:628.90px;top:351.80px" width="8" height="9" viewBox="0 0 8 9"><path d="M4 .3c1.9 0 2.9 1.4 2.9 3.2v2.4l.9 1.4H.2l.9-1.4V3.5C1.1 1.7 2.1.3 4 .3z" fill="#0a2a1c"/><path d="M2.9 7.8a1.1 1.1 0 0 0 2.2 0z" fill="#0a2a1c"/></svg>
</div>
<div class="edge" style="left:783.70px;top:67.00px;height:361.0px;z-index:5"></div>
<div class="edge" style="left:761.90px;top:64.60px;width:20px;height:1.1px;z-index:5"></div>
</body></html>
